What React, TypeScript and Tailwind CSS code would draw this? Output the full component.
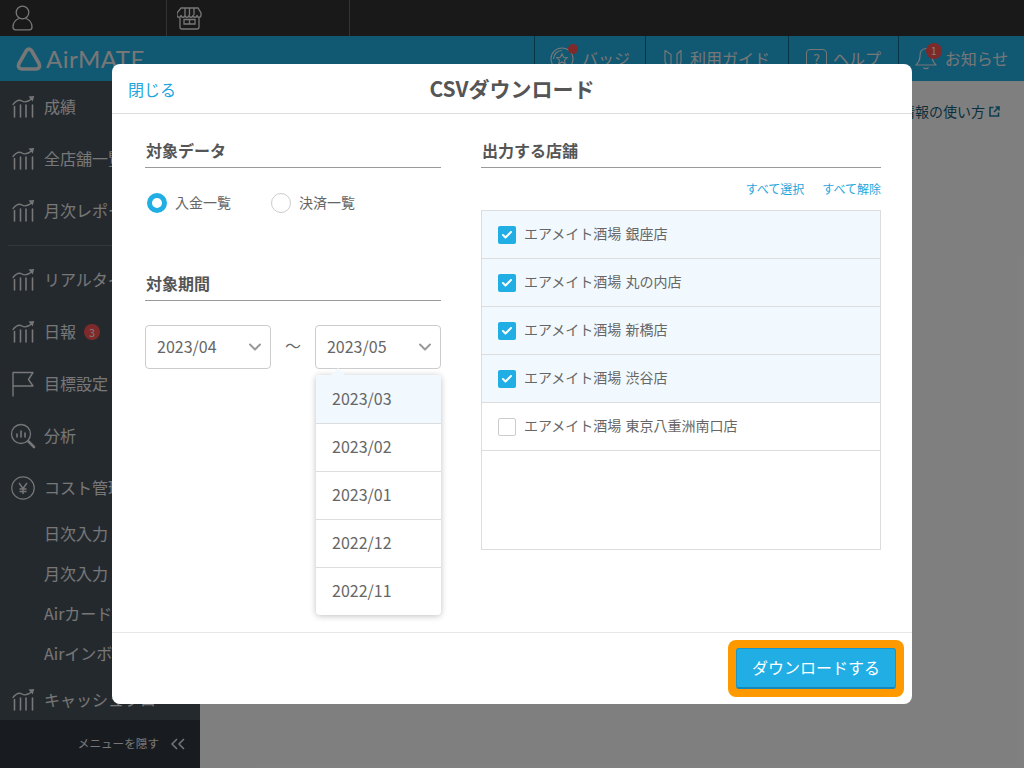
import { ChevronDown, Check } from "lucide-react";

const FONT = "font-['Noto_Sans_CJK_JP','Noto_Sans',sans-serif]";

// Sidebar icons
function ChartIcon() {
  return (
    <svg width="24" height="24" viewBox="0 0 24 24" fill="none" stroke="#eee" strokeWidth="1.3" strokeLinecap="round">
      <path d="M3.500 11.500V22M9.500 10V22M15 10V22M21.500 10V22" strokeWidth="1.600" />
      <path d="M2 9.500C5.500 5 8.500 4.500 11 6C14 8 17 7 21 3.500" />
      <path d="M17.500 1.600l5.700-.6-1.500 5.500z" fill="#eee" stroke="none" />
    </svg>
  );
}

function FlagIcon() {
  return (
    <svg width="24" height="26" viewBox="0 0 24 26" fill="none" stroke="#eee" strokeWidth="1.4" strokeLinecap="round" strokeLinejoin="round">
      <path d="M2 25V1.5h20L17.5 8.5l4.5 6.5H2" />
    </svg>
  );
}

function SearchChartIcon() {
  return (
    <svg width="26" height="26" viewBox="0 0 26 26" fill="none" stroke="#eee" strokeWidth="1.3" strokeLinecap="round">
      <circle cx="11" cy="11" r="9.5" />
      <path d="M7 14v-3M11 14V8M15 14v-4" strokeWidth="1.6" />
      <path d="M18.5 18.5L24 24" strokeWidth="2.6" />
    </svg>
  );
}

function YenIcon() {
  return (
    <svg width="24" height="24" viewBox="0 0 24 24" fill="none" stroke="#eee" strokeWidth="1.2">
      <circle cx="12" cy="12" r="11.2" />
      <path d="M8 7l4 5.5L16 7M12 12.5V18M8.5 13h7M8.5 15.5h7" strokeWidth="1.4" />
    </svg>
  );
}

// Header icons
function BadgeIcon() {
  return (
    <svg width="24" height="24" viewBox="0 0 24 24" fill="none" stroke="#eee" strokeWidth="1.1">
      <circle cx="12" cy="12" r="11" />
      <path d="M3.500 12A8.500 8.500 0 0 1 12 3.500" />
      <path d="M12 6.800l1.600 3.400 3.700.4-2.800 2.500.8 3.700-3.300-1.900-3.300 1.900.8-3.700-2.800-2.500 3.700-.4z" />
    </svg>
  );
}

function BookIcon() {
  return (
    <svg width="18" height="20" viewBox="0 0 18 20" fill="none" stroke="#eee" strokeWidth="1.2" strokeLinejoin="round">
      <path d="M1 1.500l6 4v13l-4-3c-1.300-.8-2-1.500-2-3zM17 1.500l-4 3.500v13l2-2c1.300-1 2-1.500 2-3z" />
    </svg>
  );
}

function HelpIcon() {
  return (
    <div className="w-[21px] h-[19px] rounded-[4px] border border-[#eee] flex items-center justify-center text-[14px] leading-none text-[#eee]">?</div>
  );
}

function BellIcon() {
  return (
    <svg width="22" height="24" viewBox="0 0 22 24" fill="none" stroke="#eee" strokeWidth="1.2" strokeLinejoin="round">
      <path d="M11 1.500C6.500 1.500 5 5 5 9c0 4-1.500 6.500-4 9h20c-2.500-2.500-4-5-4-9 0-4-1.500-7.500-6-7.500z" />
      <path d="M8.500 20.500c.6 1.500 4.400 1.500 5 0" />
    </svg>
  );
}

function HeaderNav({ label, icon, dot, width, gap }: { label: string; icon: React.ReactNode; dot?: string; width: string; gap: string }) {
  return (
    <div className={`relative flex items-center justify-center border-l border-[#0d6a8d] h-full ${gap} ${width}`}>
      <div className="relative">
        {icon}
        {dot !== undefined && (
          <span className={`absolute rounded-full bg-[#ff5454] text-white flex items-center justify-center ${dot ? "w-4 h-4 text-[10px] -top-[4px] left-[11px]" : "w-[10px] h-[10px] -top-[3px] left-[18px]"}`}>
            {dot}
          </span>
        )}
      </div>
      <span className="text-[16px] text-[#eee] leading-none mb-[2px]">{label}</span>
    </div>
  );
}

function SideItem({ icon, label, badge }: { icon: React.ReactNode; label: string; badge?: string }) {
  return (
    <div className="h-[52px] flex items-center shrink-0">
      <div className="w-[44px] flex justify-center pl-[4px] pr-[2px]">{icon}</div>
      <span className="text-[16px] text-[#eee] whitespace-nowrap mb-[2px]">{label}</span>
      {badge && (
        <span className="ml-2 w-4 h-4 rounded-full bg-[#ff5454] text-white text-[10px] flex items-center justify-center">{badge}</span>
      )}
    </div>
  );
}

function SubItem({ label }: { label: string }) {
  return <div className="h-10 flex items-center pl-[44px] pb-[2px] text-[16px] text-[#eee] whitespace-nowrap shrink-0">{label}</div>;
}

function SectionTitle({ children }: { children: React.ReactNode }) {
  return <div className="h-[34px] border-b border-[#999] pl-px text-[16px] font-bold leading-[33px] text-[#555]">{children}</div>;
}

function MonthSelect({ value }: { value: string }) {
  return (
    <div className="w-[126px] h-[44px] rounded border border-[#ccc] flex items-center justify-between pl-[11px] pr-[5px] text-[16px] text-[#666] bg-white">
      <span className="mb-[2px]">{value}</span>
      <ChevronDown size={20} strokeWidth={2.4} className="text-[#999]" />
    </div>
  );
}

const months = ["2023/03", "2023/02", "2023/01", "2022/12", "2022/11"];

const shops = [
  { name: "エアメイト酒場 銀座店", checked: true },
  { name: "エアメイト酒場 丸の内店", checked: true },
  { name: "エアメイト酒場 新橋店", checked: true },
  { name: "エアメイト酒場 渋谷店", checked: true },
  { name: "エアメイト酒場 東京八重洲南口店", checked: false },
];

export default function App() {
  return (
    <div className={`relative w-[1024px] h-[768px] overflow-hidden bg-white flex flex-col ${FONT}`}>
      {/* top bar */}
      <div className="h-9 bg-[#333] flex shrink-0">
        <div className="w-[167px] h-full border-r border-[#666] pl-[12px] flex items-center">
          <svg width="22" height="26" viewBox="0 0 22 26" fill="none" stroke="#eee" strokeWidth="1.300">
            <circle cx="10.500" cy="7.500" r="6.300" />
            <path d="M7 13.500C3 15 1 18 1 22c0 1.800 1 2.800 2.500 2.800h14c1.500 0 2.500-1 2.500-2.800 0-4-2-7-6-8.500" />
          </svg>
        </div>
        <div className="w-[183px] h-full border-r border-[#666] pl-[10px] flex items-center">
          <svg width="25" height="23" viewBox="0 0 25 23" fill="none" stroke="#eee" strokeWidth="1.300">
            <path d="M4 1h17l3 5v2c0 3-4 3-4 0 0 3-4 3-4 0 0 3-4 3-4 0 0 3-4 3-4 0 0 3-4 3-4 0 0 3-4 3-4 0V6z" />
            <path d="M8 1v7M12.500 1v7M17 1v7" />
            <path d="M3 11v9c0 1.200.8 2 2 2h15c1.200 0 2-.8 2-2v-9" />
            <path d="M7 12.500h11v4.500H7zM12.500 12.500v4.500" />
          </svg>
        </div>
      </div>

      {/* header */}
      <div className="h-[45px] bg-[#22b0e6] flex items-center justify-between shrink-0">
        <div className="flex items-center pl-[16px] gap-[4px]">
          <svg width="26" height="24" viewBox="0 0 26 24" fill="none" stroke="#eee" strokeWidth="3.600" strokeLinejoin="round">
            <path d="M10.500 3.500Q13 0.800 15.500 3.500L23 16.500Q25 21.500 20 22H6Q1 21.500 3 16.500z" />
          </svg>
          <span className="font-['Lato',sans-serif] text-[24px] leading-none text-[#eee] tracking-[0.5px]">AirMATE</span>
        </div>
        <div className="flex h-full">
          <HeaderNav label="バッジ" icon={<BadgeIcon />} dot="" width="w-[111px]" gap="gap-2" />
          <HeaderNav label="利用ガイド" icon={<BookIcon />} width="w-[143px]" gap="gap-2" />
          <HeaderNav label="ヘルプ" icon={<HelpIcon />} width="w-[110px]" gap="gap-[6px]" />
          <HeaderNav label="お知らせ" icon={<BellIcon />} dot="1" width="w-[126px]" gap="gap-2" />
        </div>
      </div>

      <div className="flex flex-1 min-h-0">
        {/* sidebar */}
        <div className="w-[200px] bg-[#48525c] relative overflow-hidden flex flex-col shrink-0">
          <SideItem icon={<ChartIcon />} label="成績" />
          <SideItem icon={<ChartIcon />} label="全店舗一覧" />
          <SideItem icon={<ChartIcon />} label="月次レポート" />
          <div className="h-[17px] flex items-center pl-2 shrink-0">
            <div className="h-px w-full bg-[#666f78]" />
          </div>
          <SideItem icon={<ChartIcon />} label="リアルタイム" />
          <SideItem icon={<ChartIcon />} label="日報" badge="3" />
          <SideItem icon={<FlagIcon />} label="目標設定" />
          <SideItem icon={<SearchChartIcon />} label="分析" />
          <SideItem icon={<YenIcon />} label="コスト管理" />
          <SubItem label="日次入力" />
          <SubItem label="月次入力" />
          <SubItem label="Airカード連携" />
          <SubItem label="Airインボイス" />
          <SideItem icon={<ChartIcon />} label="キャッシュフロー" />
          <div className="absolute bottom-0 left-0 right-0 h-12 bg-[#303840] flex items-center justify-end gap-[12px] pr-[15px] text-[11.600px] text-[#eee]">
            メニューを隠す
            <svg width="14" height="12" viewBox="0 0 14 12" fill="none" stroke="#eee" strokeWidth="1.500">
              <path d="M6 1L1 6l5 5M13 1L8 6l5 5" />
            </svg>
          </div>
        </div>

        {/* page behind the modal */}
        <div className="flex-1 flex justify-end pt-[19px] pr-[24px]">
          <div className="flex items-center gap-[4px] h-[22px] text-[14px] text-[#1a5f7a] whitespace-nowrap">
            情報の使い方
            <svg width="11" height="11" viewBox="0 0 11 11" fill="none" stroke="#1a7fa8" strokeWidth="1.600">
              <path d="M4.500 1.500H1v8.500h8.500V6.500M6.500 1h3.500v3.500M10 1L5 6" />
            </svg>
          </div>
        </div>
      </div>

      {/* modal overlay */}
      <div className="absolute inset-0 bg-black/50 flex items-center justify-center">
        <div className="w-[800px] h-[640px] bg-white rounded-lg flex flex-col overflow-hidden">
          <div className="relative h-[50px] border-b border-[#ddd] flex items-center justify-center shrink-0">
            <span className="absolute left-4 text-[16px] text-[#1fa6dc]">閉じる</span>
            <span className="text-[21px] font-bold text-[#555]">CSVダウンロード</span>
          </div>

          <div className="flex-1 flex gap-[40px] pl-[33px] pt-[20px] min-h-0">
            {/* left column */}
            <div className="w-[296px] flex flex-col">
              <SectionTitle>対象データ</SectionTitle>
              <div className="flex items-center mt-[25px] pl-[2px] h-5 text-[14px] text-[#666]">
                <span className="w-5 h-5 rounded-full border-[5px] border-[#20aee5] bg-white" />
                <span className="ml-[8px] mb-[2px]">入金一覧</span>
                <span className="ml-[40px] w-5 h-5 rounded-full border border-[#ccc] bg-white" />
                <span className="ml-2 mb-[2px]">決済一覧</span>
              </div>

              <div className="mt-[54px]">
                <SectionTitle>対象期間</SectionTitle>
              </div>
              <div className="flex items-center justify-between mt-[24px] text-[#666]">
                <MonthSelect value="2023/04" />
                <span className="text-[16px] mb-[5px]">〜</span>
                <MonthSelect value="2023/05" />
              </div>
              <div className="relative self-end w-[125px] mt-[6px] bg-white rounded shadow-[0_1px_6px_rgba(0,0,0,0.25)]">
                <div className="absolute -top-[7px] left-[15px] w-0 h-0 border-x-[7px] border-x-transparent border-b-[7px] border-b-[#f1f9fe]" />
                {months.map((m, i) => (
                  <div
                    key={m}
                    className={`flex items-center pl-4 pb-[3px] text-[16px] text-[#666] ${i === 0 ? "h-[49px] bg-[#f1f9fe] rounded-t" : i === months.length - 1 ? "h-[47px]" : "h-[48px]"} ${i < months.length - 1 ? "border-b border-[#ddd]" : ""}`}
                  >
                    {m}
                  </div>
                ))}
              </div>
            </div>

            {/* right column */}
            <div className="w-[400px] flex flex-col">
              <SectionTitle>出力する店舗</SectionTitle>
              <div className="flex justify-end gap-[18px] h-[42px] items-center text-[12px] text-[#1fa6dc]">
                <span>すべて選択</span>
                <span>すべて解除</span>
              </div>
              <div className="h-[340px] border border-[#ddd] flex flex-col">
                {shops.map((s) => (
                  <div
                    key={s.name}
                    className={`h-[48px] flex items-center gap-[8px] pl-4 border-b border-[#ddd] text-[14px] text-[#666] ${s.checked ? "bg-[#f1f9fe]" : "bg-white"}`}
                  >
                    {s.checked ? (
                      <span className="w-[18px] h-[18px] rounded-[2px] bg-[#20aee5] flex items-center justify-center">
                        <Check size={12} strokeWidth={4} className="text-white" />
                      </span>
                    ) : (
                      <span className="w-[18px] h-[18px] rounded-[2px] border border-[#ccc] bg-white" />
                    )}
                    <span className="mb-[3px] [word-spacing:1px]">{s.name}</span>
                  </div>
                ))}
              </div>
            </div>
          </div>

          {/* footer */}
          <div className="h-[72px] border-t border-[#e8e8e8] flex items-start justify-end pt-[7px] pr-[8px] shrink-0">
            <div className="w-[176px] h-[57px] rounded-lg bg-[#ff9900] p-2">
              <div className="h-[41px] rounded-[3px] bg-[#20aee5] border border-[#1a97c9] border-b-2 border-b-[#1488b8] flex items-center justify-center text-[16px] text-white pb-[2px]">
                ダウンロードする
              </div>
            </div>
          </div>
        </div>
      </div>
    </div>
  );
}
